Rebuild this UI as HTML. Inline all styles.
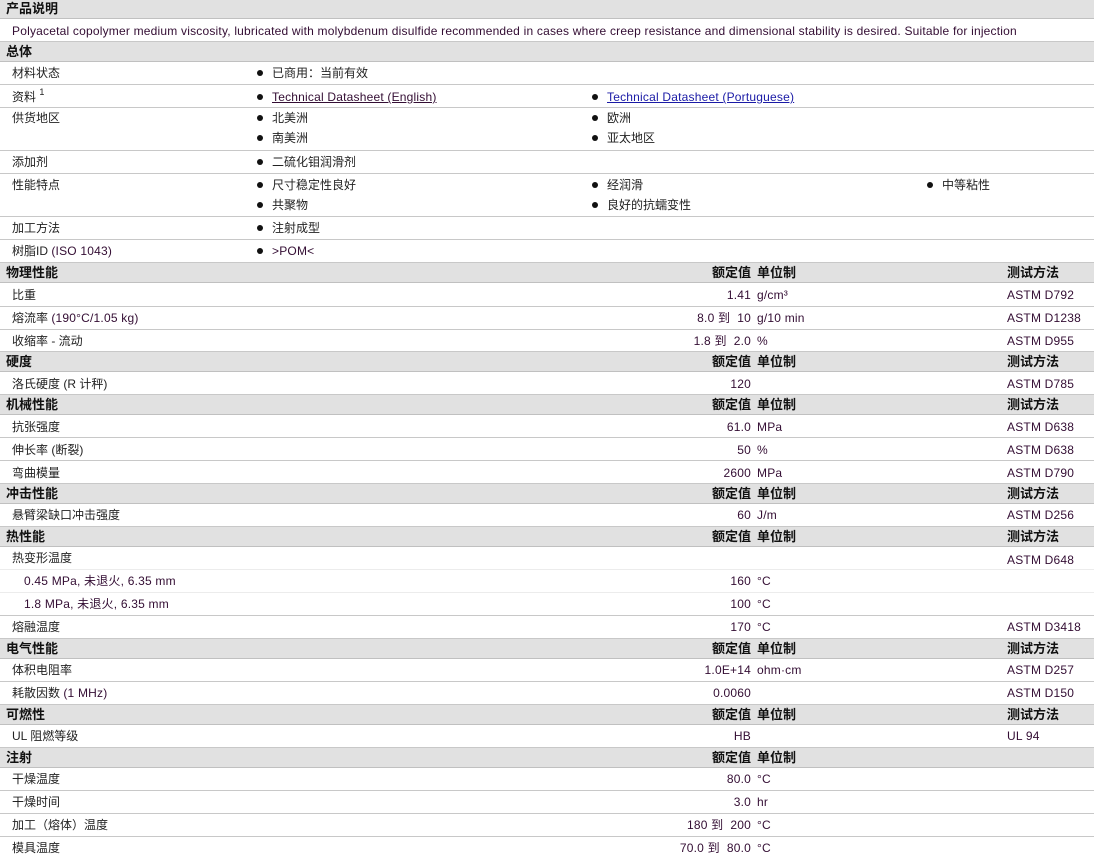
<!DOCTYPE html>
<html><head><meta charset="utf-8"><style>
body{margin:0;width:1094px;height:859px;background:#fff;font-family:"Liberation Sans","Noto Sans CJK SC",sans-serif;font-size:12px;color:#222;position:relative;overflow:hidden}
.r{position:absolute;left:0;width:1094px;box-sizing:border-box;border-bottom:1px solid #c8c8c8}
.r.s{border-bottom-color:#ececec}
.h{background:#e1e1e1;font-weight:bold;font-size:13px;color:#111;border-bottom:1px solid #c0c0c0}
.r span{position:absolute;white-space:nowrap}
.l{left:12px}.hl{left:6px}.sub{left:24px}
.v{right:343px}.u{left:757px}.t{left:1007px}
.b1{left:257px}.b2{left:592px}.b3{left:927px}
.b1:before,.b2:before,.b3:before{content:"";display:inline-block;width:6px;height:6px;border-radius:50%;background:#111;margin-right:9px;vertical-align:1px}
a{color:#1a1aa6;text-decoration:underline}
.p{color:#330d33;letter-spacing:0.2px}
sup{font-size:9px;line-height:0;vertical-align:6px}
</style></head><body>
<div class="r h" style="top:0;height:19px;line-height:18px"><span class="hl">产品说明</span></div>
<div class="r" style="top:19px;height:23px;line-height:24px"><span class="l p">Polyacetal copolymer medium viscosity, lubricated with molybdenum disulfide recommended in cases where creep resistance and dimensional stability is desired. Suitable for injection</span></div>
<div class="r h" style="top:42px;height:20px;line-height:20px"><span class="hl">总体</span></div>
<div class="r" style="top:62px;height:23px;line-height:23px"><span class="l">材料状态</span><span class="b1">已商用：当前有效</span></div>
<div class="r" style="top:85px;height:23px;line-height:24px"><span class="l">资料 <sup>1</sup></span><span class="b1"><a class="p">Technical Datasheet (English)</a></span><span class="b2"><a class="p" style="color:#1a1aa6">Technical Datasheet (Portuguese)</a></span></div>
<div class="r" style="top:108px;height:43px;line-height:21px"><span class="l" style="top:0">供货地区</span><span class="b1" style="top:0">北美洲</span><span class="b2" style="top:0">欧洲</span><span class="b1" style="top:20px">南美洲</span><span class="b2" style="top:20px">亚太地区</span></div>
<div class="r" style="top:151px;height:23px;line-height:23px"><span class="l">添加剂</span><span class="b1">二硫化钼润滑剂</span></div>
<div class="r" style="top:174px;height:43px;line-height:22px"><span class="l" style="top:0">性能特点</span><span class="b1" style="top:0">尺寸稳定性良好</span><span class="b2" style="top:0">经润滑</span><span class="b3" style="top:0">中等粘性</span><span class="b1" style="top:20px">共聚物</span><span class="b2" style="top:20px">良好的抗蠕变性</span></div>
<div class="r" style="top:217px;height:23px;line-height:23px"><span class="l">加工方法</span><span class="b1">注射成型</span></div>
<div class="r" style="top:240px;height:23px;line-height:23px"><span class="l">树脂ID <span style="position:static" class="p">(ISO 1043)</span></span><span class="b1 p">&gt;POM&lt;</span></div>

<div class="r h" style="top:263px;height:20px;line-height:19px"><span class="hl">物理性能</span><span class="v">额定值</span><span class="u">单位制</span><span class="t">测试方法</span></div>
<div class="r" style="top:283px;height:24px;line-height:25px"><span class="l">比重</span><span class="v p">1.41</span><span class="u p">g/cm³</span><span class="t p">ASTM D792</span></div>
<div class="r" style="top:307px;height:23px;line-height:23px"><span class="l">熔流率 <span style="position:static" class="p">(190°C/1.05 kg)</span></span><span class="v p">8.0 到&nbsp; 10</span><span class="u p">g/10 min</span><span class="t p">ASTM D1238</span></div>
<div class="r" style="top:330px;height:22px;line-height:22px"><span class="l">收缩率 - 流动</span><span class="v p">1.8 到&nbsp; 2.0</span><span class="u p">%</span><span class="t p">ASTM D955</span></div>

<div class="r h" style="top:352px;height:20px;line-height:19px"><span class="hl">硬度</span><span class="v">额定值</span><span class="u">单位制</span><span class="t">测试方法</span></div>
<div class="r" style="top:372px;height:23px;line-height:24px"><span class="l">洛氏硬度 (R 计秤)</span><span class="v p">120</span><span class="t p">ASTM D785</span></div>

<div class="r h" style="top:395px;height:20px;line-height:19px"><span class="hl">机械性能</span><span class="v">额定值</span><span class="u">单位制</span><span class="t">测试方法</span></div>
<div class="r" style="top:415px;height:23px;line-height:24px"><span class="l">抗张强度</span><span class="v p">61.0</span><span class="u p">MPa</span><span class="t p">ASTM D638</span></div>
<div class="r" style="top:438px;height:23px;line-height:24px"><span class="l">伸长率 (断裂)</span><span class="v p">50</span><span class="u p">%</span><span class="t p">ASTM D638</span></div>
<div class="r" style="top:461px;height:23px;line-height:24px"><span class="l">弯曲模量</span><span class="v p">2600</span><span class="u p">MPa</span><span class="t p">ASTM D790</span></div>

<div class="r h" style="top:484px;height:20px;line-height:19px"><span class="hl">冲击性能</span><span class="v">额定值</span><span class="u">单位制</span><span class="t">测试方法</span></div>
<div class="r" style="top:504px;height:23px;line-height:23px"><span class="l">悬臂梁缺口冲击强度</span><span class="v p">60</span><span class="u p">J/m</span><span class="t p">ASTM D256</span></div>

<div class="r h" style="top:527px;height:20px;line-height:19px"><span class="hl">热性能</span><span class="v">额定值</span><span class="u">单位制</span><span class="t">测试方法</span></div>
<div class="r s" style="top:547px;height:23px;line-height:22px"><span class="l">热变形温度</span><span class="t p" style="top:2px">ASTM D648</span></div>
<div class="r s" style="top:570px;height:23px;line-height:23px"><span class="sub p">0.45 MPa, 未退火, 6.35 mm</span><span class="v p">160</span><span class="u p">°C</span></div>
<div class="r" style="top:593px;height:23px;line-height:23px"><span class="sub p">1.8 MPa, 未退火, 6.35 mm</span><span class="v p">100</span><span class="u p">°C</span></div>
<div class="r" style="top:616px;height:23px;line-height:23px"><span class="l">熔融温度</span><span class="v p">170</span><span class="u p">°C</span><span class="t p">ASTM D3418</span></div>

<div class="r h" style="top:639px;height:20px;line-height:19px"><span class="hl">电气性能</span><span class="v">额定值</span><span class="u">单位制</span><span class="t">测试方法</span></div>
<div class="r" style="top:659px;height:23px;line-height:23px"><span class="l">体积电阻率</span><span class="v p">1.0E+14</span><span class="u p">ohm·cm</span><span class="t p">ASTM D257</span></div>
<div class="r" style="top:682px;height:23px;line-height:23px"><span class="l">耗散因数 <span style="position:static" class="p">(1 MHz)</span></span><span class="v p">0.0060</span><span class="t p">ASTM D150</span></div>

<div class="r h" style="top:705px;height:20px;line-height:19px"><span class="hl">可燃性</span><span class="v">额定值</span><span class="u">单位制</span><span class="t">测试方法</span></div>
<div class="r" style="top:725px;height:23px;line-height:23px"><span class="l">UL 阻燃等级</span><span class="v p">HB</span><span class="t p">UL 94</span></div>

<div class="r h" style="top:748px;height:20px;line-height:19px"><span class="hl">注射</span><span class="v">额定值</span><span class="u">单位制</span></div>
<div class="r" style="top:768px;height:23px;line-height:23px"><span class="l">干燥温度</span><span class="v p">80.0</span><span class="u p">°C</span></div>
<div class="r" style="top:791px;height:23px;line-height:23px"><span class="l">干燥时间</span><span class="v p">3.0</span><span class="u p">hr</span></div>
<div class="r" style="top:814px;height:23px;line-height:23px"><span class="l">加工（熔体）温度</span><span class="v p">180 到&nbsp; 200</span><span class="u p">°C</span></div>
<div class="r" style="top:837px;height:23px;line-height:23px;border-bottom:0"><span class="l">模具温度</span><span class="v p">70.0 到&nbsp; 80.0</span><span class="u p">°C</span></div>
</body></html>
